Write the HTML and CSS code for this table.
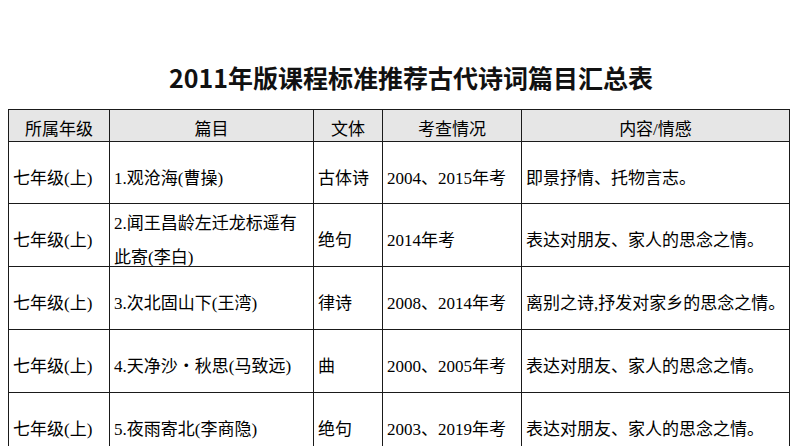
FILE: index.html
```html
<!DOCTYPE html>
<html lang="zh-CN">
<head>
<meta charset="utf-8">
<title>2011年版课程标准推荐古代诗词篇目汇总表</title>
<link rel="stylesheet" href="styles.css">
</head>
<body>
<div class="page">
  <h1 class="title">2011年版课程标准推荐古代诗词篇目汇总表</h1>
  <div class="table">
    <div class="cell head">所属年级</div>
    <div class="cell head">篇目</div>
    <div class="cell head">文体</div>
    <div class="cell head">考查情况</div>
    <div class="cell head">内容/情感</div>

    <div class="cell">七年级(上)</div>
    <div class="cell">1.观沧海(曹操)</div>
    <div class="cell">古体诗</div>
    <div class="cell">2004、2015年考</div>
    <div class="cell">即景抒情、托物言志。</div>

    <div class="cell">七年级(上)</div>
    <div class="cell">2.闻王昌龄左迁龙标遥有<br>此寄(李白)</div>
    <div class="cell">绝句</div>
    <div class="cell">2014年考</div>
    <div class="cell">表达对朋友、家人的思念之情。</div>

    <div class="cell">七年级(上)</div>
    <div class="cell">3.次北固山下(王湾)</div>
    <div class="cell">律诗</div>
    <div class="cell">2008、2014年考</div>
    <div class="cell">离别之诗,抒发对家乡的思念之情。</div>

    <div class="cell">七年级(上)</div>
    <div class="cell">4.天净沙・秋思(马致远)</div>
    <div class="cell">曲</div>
    <div class="cell">2000、2005年考</div>
    <div class="cell">表达对朋友、家人的思念之情。</div>

    <div class="cell">七年级(上)</div>
    <div class="cell">5.夜雨寄北(李商隐)</div>
    <div class="cell">绝句</div>
    <div class="cell">2003、2019年考</div>
    <div class="cell">表达对朋友、家人的思念之情。</div>
  </div>
</div>
</body>
</html>
```

FILE: styles.css
```css
html, body {
  margin: 0;
  padding: 0;
  background: #ffffff;
  overflow: hidden;
}

.page {
  width: 794px;
  height: 446px;
  padding: 60px 0 0 8px;
  box-sizing: border-box;
}

.title {
  margin: 0 0 14px 0;
  padding-left: 20px;
  text-align: center;
  width: 786px;
  box-sizing: border-box;
  font-family: "Noto Sans CJK SC", "Noto Sans", sans-serif;
  font-weight: 700;
  font-size: 25px;
  line-height: 35px;
  color: #111111;
}

.table {
  display: grid;
  grid-template-columns: 101px 204px 69px 139px 268px;
  grid-template-rows: 32px 62px 63px 63px 63px 63px;
  width: 782px;
  border-left: 1px solid #1a1a1a;
  border-top: 1px solid #1a1a1a;
  box-sizing: border-box;
  font-family: "Liberation Serif", "Noto Sans CJK SC", serif;
  font-size: 17px;
  color: #000000;
}

.cell {
  border-right: 1px solid #1a1a1a;
  border-bottom: 1px solid #1a1a1a;
  display: flex;
  align-items: center;
  padding: 12px 0 0 4px;
  line-height: 34px;
  white-space: nowrap;
  min-width: 0;
  min-height: 0;
}

.head {
  background: #e6e6e6;
  justify-content: center;
  padding: 9px 0 0 0;
}
```
